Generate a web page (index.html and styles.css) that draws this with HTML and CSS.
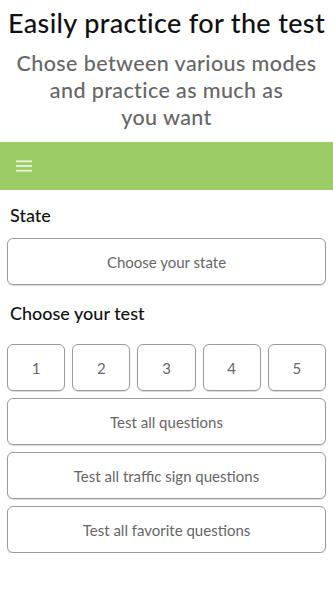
FILE: index.html
```html
<!DOCTYPE html>
<html>
<head>
<meta charset="utf-8">
<link rel="stylesheet" href="styles.css">
</head>
<body>
<header class="hero">
  <h1 class="title">Easily practice for the test</h1>
  <p class="subtitle">Chose between various modes and practice as much as<br>you want</p>
</header>
<nav class="bar">
  <svg class="menu" width="16" height="12" viewBox="0 0 16 12"><rect x="0" y="0.5" width="16" height="1.6" fill="#f3f7e6"/><rect x="0" y="5.2" width="16" height="1.6" fill="#f3f7e6"/><rect x="0" y="9.9" width="16" height="1.6" fill="#f3f7e6"/></svg>
</nav>
<main class="content">
  <h2 class="label">State</h2>
  <div class="btn">Choose your state</div>
  <h2 class="label label-test">Choose your test</h2>
  <div class="nums">
    <div class="btn num">1</div>
    <div class="btn num">2</div>
    <div class="btn num">3</div>
    <div class="btn num">4</div>
    <div class="btn num">5</div>
  </div>
  <div class="list">
    <div class="btn">Test all questions</div>
    <div class="btn">Test all traffic sign questions</div>
    <div class="btn">Test all favorite questions</div>
  </div>
</main>
</body>
</html>
```
FILE: styles.css
```css
* { box-sizing: border-box; }
body {
  margin: 0;
  font-family: Lato, "Open Sans", sans-serif;
  background: #fff;
  color: #111;
}
.hero {
  text-align: center;
  padding: 6px 0 0;
  height: 142px;
}
.title {
  margin: 0;
  font-size: 27px;
  font-weight: 500;
  line-height: 34px;
  color: #111;
  letter-spacing: 0.35px;
  white-space: nowrap;
}
.subtitle {
  margin: 10px 10px 0;
  font-size: 21.5px;
  line-height: 27px;
  color: #666;
  font-weight: 500;
  letter-spacing: 0.4px;
}
.bar {
  height: 48px;
  background: #9ccc65;
  display: flex;
  align-items: center;
  padding-left: 16px;
}
.content {
  padding: 0 7px;
}
.label {
  margin: 0;
  padding: 13px 3px 0;
  font-size: 18px;
  font-weight: 500;
  line-height: 24px;
  color: #111;
  height: 48px;
}
.label-test {
  padding-top: 16px;
  height: 59px;
}
.btn {
  height: 47px;
  border: 1px solid #9a9a9a;
  border-radius: 6px;
  display: flex;
  align-items: center;
  justify-content: center;
  font-size: 15px;
  color: #666;
  box-shadow: 0 1px 1px rgba(0,0,0,0.15);
}
.nums {
  display: grid;
  grid-template-columns: repeat(5, 1fr);
  gap: 7px;
  margin-bottom: 7px;
}
.list {
  display: flex;
  flex-direction: column;
  gap: 7px;
}
```
